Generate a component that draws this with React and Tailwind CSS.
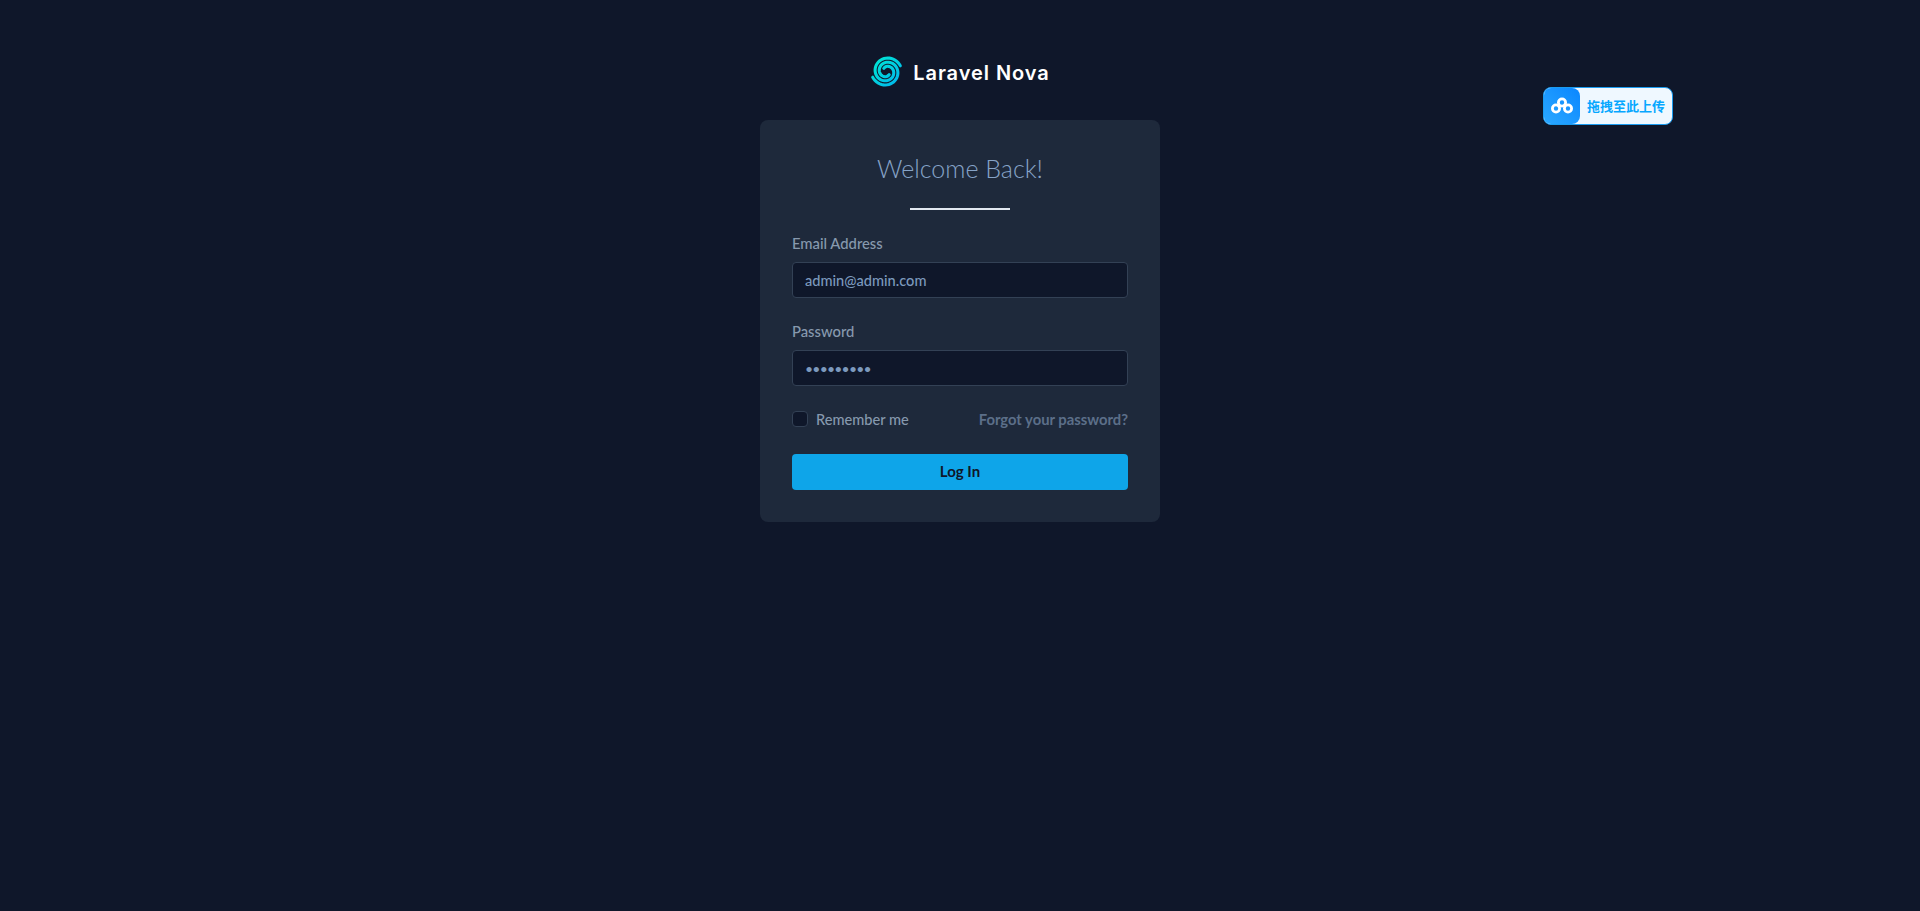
import React from "react";

// two-arm spiral for the Nova mark
function spiralPath(endAngle) {
  const cx = 16;
  const cy = 16;
  let d = "";
  for (let i = 0; i <= 60; i++) {
    const t = i / 60;
    const r = 4 + 10.5 * t;
    const a = endAngle - 2.6 * Math.PI * (1 - t);
    const x = (cx + r * Math.cos(a)).toFixed(2);
    const y = (cy + r * Math.sin(a)).toFixed(2);
    d += `${i === 0 ? "M" : "L"}${x} ${y} `;
  }
  return d;
}

function NovaLogo() {
  return (
    <svg width="33" height="33" viewBox="0 0 32 32" fill="none">
      <defs>
        <linearGradient id="swirl" x1="2" y1="2" x2="30" y2="30" gradientUnits="userSpaceOnUse">
          <stop offset="0" stopColor="#00ead0" />
          <stop offset="1" stopColor="#00b4f0" />
        </linearGradient>
      </defs>
      <path d={spiralPath(-Math.PI / 8)} stroke="url(#swirl)" strokeWidth="3" strokeLinecap="round" />
      <path d={spiralPath((7 * Math.PI) / 8)} stroke="url(#swirl)" strokeWidth="3" strokeLinecap="round" />
    </svg>
  );
}

function DriveIcon() {
  return (
    <svg width="22" height="18" viewBox="0 0 22 18" fill="none" stroke="#fff" strokeWidth="2.8">
      <circle cx="11" cy="5.5" r="3.6" />
      <circle cx="5" cy="11.5" r="3.6" />
      <circle cx="17" cy="11.5" r="3.6" />
    </svg>
  );
}

function UploadBadge() {
  return (
    <div className="absolute left-[1543px] top-[87px] flex h-[38px] w-[130px] overflow-hidden rounded-lg border border-[#1a9cf0] bg-[#eff8ff]">
      <div className="flex w-[36px] items-center justify-center rounded-r-lg bg-gradient-to-tr from-[#2aa8ff] to-[#0a86ff]">
        <DriveIcon />
      </div>
      <span className="ml-[7px] self-center whitespace-nowrap font-['Noto_Sans_CJK_SC',sans-serif] text-[13px] font-bold text-[#06a7ff]">
        拖拽至此上传
      </span>
    </div>
  );
}

export default function App() {
  return (
    <div className="relative min-h-[911px] bg-[#0f172a] pt-[55px] font-['Lato','Open_Sans',sans-serif]">
      <UploadBadge />

      <div className="flex h-[33px] items-center justify-center gap-[10px]">
        <NovaLogo />
        <span className="pt-[2px] font-['Inter',sans-serif] text-[20px] font-semibold tracking-[0.95px] text-white">
          Laravel Nova
        </span>
      </div>

      <form className="mx-auto mt-[32px] h-[402px] w-[400px] rounded-lg bg-[#1e293b] p-8">
        <h2 className="text-center text-[25px] leading-8 font-light text-[#86a3c7]">Welcome Back!</h2>
        <div className="mx-auto mt-[24px] mb-[21px] h-[2px] w-[100px] bg-[#e2e8f0]" />

        <label className="block text-[14.8px] leading-[24px] font-medium text-[#8799ae]">Email Address</label>
        <input
          type="text"
          readOnly
          value="admin@admin.com"
          className="mt-[7px] block h-[36px] w-full rounded border border-[#334155] bg-[#0f172a] px-3 text-[14.6px] font-medium text-[#7c99bd]"
        />

        <label className="mt-[21px] block text-[14.8px] leading-[24px] font-medium text-[#8799ae]">Password</label>
        <input
          type="password"
          readOnly
          value="123456789"
          className="mt-[7px] block h-[36px] w-full rounded border border-[#334155] bg-[#0f172a] px-3 text-[14px] tracking-[-0.8px] text-[#7c99bd]"
        />

        <div className="mt-[21px] flex h-[24px] items-center justify-between">
          <div className="flex items-center gap-2">
            <span className="block h-4 w-4 rounded border border-[#334155] bg-[#0f172a]" />
            <span className="pt-px text-[14.6px] font-medium text-[#8799ae]">Remember me</span>
          </div>
          <a className="text-[14.8px] font-bold text-[#5c6f89]">Forgot your password?</a>
        </div>

        <button
          type="button"
          className="mt-[23px] block h-[36px] w-full rounded bg-[#0ea5e9] pb-[2px] text-[15px] font-bold text-[#0f172a]"
        >
          Log In
        </button>
      </form>
    </div>
  );
}
